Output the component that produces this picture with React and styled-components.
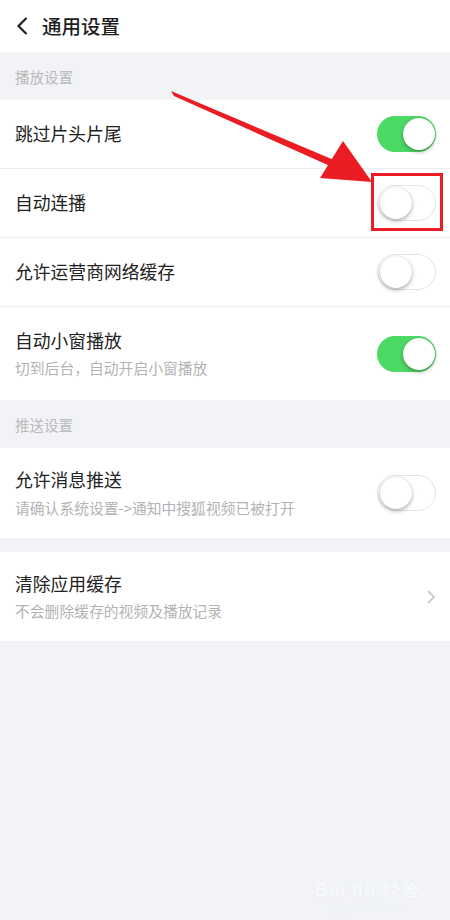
import React from "react";
import styled, { createGlobalStyle } from "styled-components";

const Global = createGlobalStyle`
  html, body { margin: 0; padding: 0; background: #f1f3f6; }
  body { font-family: "Noto Sans CJK SC", "Noto Sans", sans-serif; }
  * { box-sizing: border-box; }
`;

const Page = styled.div`
  position: relative;
  width: 450px;
  height: 920px;
  background: #f1f3f6;
  overflow: hidden;
`;

const Header = styled.div`
  height: 52px;
  background: #fff;
  display: flex;
  align-items: center;
  padding-left: 16px;
  gap: 13px;
`;

const Title = styled.div`
  font-size: 19.5px;
  color: #1e1e1e;
  font-weight: 500;
  line-height: 1;
`;

const SectionHead = styled.div`
  height: 48px;
  display: flex;
  align-items: center;
  padding-left: 15px;
  font-size: 14.5px;
  color: #b9b9b9;
`;

const Gap = styled.div`
  height: 14px;
`;

const Group = styled.div`
  background: #fff;
`;

const Row = styled.div`
  height: ${(p) => p.$h}px;
  display: flex;
  align-items: center;
  justify-content: space-between;
  padding: 0 14px 0 15px;
  border-top: ${(p) => (p.$first ? "none" : "1px solid #ededed")};
`;

const Texts = styled.div`
  display: flex;
  flex-direction: column;
  gap: 8px;
`;

const Label = styled.div`
  font-size: 17.8px;
  color: #222;
  line-height: 1.2;
`;

const Sub = styled.div`
  font-size: 14.8px;
  color: #b3b3b3;
  line-height: 1.2;
`;

const Track = styled.div`
  width: 59px;
  height: 36px;
  border-radius: 18px;
  background: ${(p) => (p.$on ? "#4cd964" : "#fff")};
  border: ${(p) => (p.$on ? "none" : "1.5px solid #e4e4e4")};
  display: flex;
  align-items: center;
  justify-content: ${(p) => (p.$on ? "flex-end" : "flex-start")};
  padding: 0 1.5px;
`;

const Knob = styled.div`
  width: 32px;
  height: 32px;
  border-radius: 50%;
  background: #fff;
  box-shadow: 0 2px 4px rgba(0, 0, 0, 0.3), 0 0 1px rgba(0, 0, 0, 0.2);
`;

const Overlay = styled.svg`
  position: absolute;
  left: 0;
  top: 0;
  pointer-events: none;
`;

const Watermark = styled.div`
  position: absolute;
  right: 30px;
  bottom: 8px;
  display: flex;
  flex-direction: column;
  align-items: center;
  color: #f8f9fb;
  font-family: "Liberation Sans", sans-serif;
  text-shadow: 0 0 1px #e3e7ec;
`;

const WmTop = styled.div`
  font-size: 18px;
  font-weight: bold;
  letter-spacing: 1px;
`;

const WmBottom = styled.div`
  font-size: 9px;
`;

const Toggle = ({ on }) => (
  <Track $on={on}>
    <Knob />
  </Track>
);

const Chevron = () => (
  <svg width="10" height="16" viewBox="0 0 10 16">
    <path d="M2 2 L8 8 L2 14" fill="none" stroke="#c4c4c4" strokeWidth="1.6" />
  </svg>
);

export default function App() {
  return (
    <Page>
      <Global />
      <Header>
        <svg width="13" height="20" viewBox="0 0 13 20">
          <path d="M10.5 2 L2.5 10 L10.5 18" fill="none" stroke="#222" strokeWidth="2.2" />
        </svg>
        <Title>通用设置</Title>
      </Header>
      <SectionHead>播放设置</SectionHead>
      <Group>
        <Row $h={68} $first>
          <Label>跳过片头片尾</Label>
          <Toggle on />
        </Row>
        <Row $h={69}>
          <Label>自动连播</Label>
          <Toggle />
        </Row>
        <Row $h={69}>
          <Label>允许运营商网络缓存</Label>
          <Toggle />
        </Row>
        <Row $h={94}>
          <Texts>
            <Label>自动小窗播放</Label>
            <Sub>切到后台，自动开启小窗播放</Sub>
          </Texts>
          <Toggle on />
        </Row>
      </Group>
      <SectionHead>推送设置</SectionHead>
      <Group>
        <Row $h={90} $first>
          <Texts>
            <Label>允许消息推送</Label>
            <Sub>请确认系统设置-&gt;通知中搜狐视频已被打开</Sub>
          </Texts>
          <Toggle />
        </Row>
      </Group>
      <Gap />
      <Group>
        <Row $h={89} $first>
          <Texts>
            <Label>清除应用缓存</Label>
            <Sub>不会删除缓存的视频及播放记录</Sub>
          </Texts>
          <Chevron />
        </Row>
      </Group>
      <Overlay width="450" height="920" viewBox="0 0 450 920">
        <polygon points="171,91 174,96 330,166 334,160" fill="#ec1c24" />
        <polygon points="320,178 372,182 343,141" fill="#ec1c24" />
        <rect x="372.5" y="174.5" width="69" height="55" fill="none" stroke="#ec1c24" strokeWidth="3" />
      </Overlay>
      <Watermark>
        <WmTop>Bai du 经验</WmTop>
        <WmBottom>jingyan.baidu.com</WmBottom>
      </Watermark>
    </Page>
  );
}
